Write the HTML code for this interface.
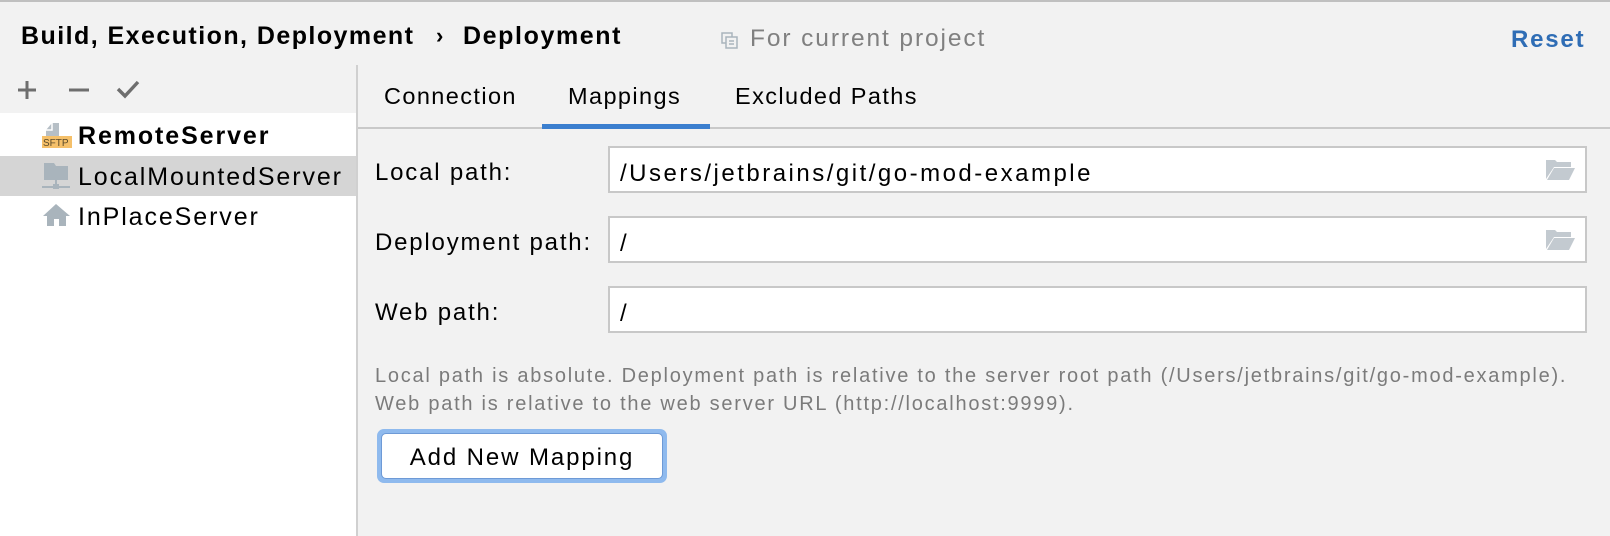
<!DOCTYPE html>
<html><head><meta charset="utf-8"><style>
*{margin:0;padding:0;box-sizing:border-box}
body{width:1610px;height:536px;background:#f2f2f2;font-family:"Liberation Sans",sans-serif;color:#000;position:relative;overflow:hidden}
.a{position:absolute;white-space:nowrap}
.lbl{font-size:24px;letter-spacing:1.8px}
.tab{font-size:23.5px;letter-spacing:1.4px}
.field{position:absolute;left:608px;width:979px;height:47px;background:#fff;border:2px solid #c8c8c8;font-size:24px;padding:12px 0 0 10px;letter-spacing:2.5px}
.help{font-size:20px;color:#7b7b7b;letter-spacing:1.75px}
.row{position:absolute;left:0;width:356px;height:40px}
.li{font-size:25px;letter-spacing:1.9px}
</style></head><body>
<div class="a" style="left:0;top:0;width:1610px;height:2px;background:#c0c0c0"></div>
<div class="a" style="left:21px;top:22px;font-size:25px;font-weight:bold;letter-spacing:1.45px">Build, Execution, Deployment</div>
<div class="a" style="left:436px;top:23px;font-size:22px;font-weight:bold">›</div>
<div class="a" style="left:463px;top:22px;font-size:25px;font-weight:bold;letter-spacing:1.6px">Deployment</div>
<svg class="a" style="left:721px;top:32px" width="18" height="18" viewBox="0 0 18 18"><rect x="1" y="1" width="10" height="10" fill="none" stroke="#a9b4bc" stroke-width="1.5"/><rect x="5" y="5" width="11" height="11" fill="#f2f2f2" stroke="#a9b4bc" stroke-width="1.5"/><path d="M8 9h5M8 12h5" stroke="#a9b4bc" stroke-width="1.5"/></svg>
<div class="a" style="left:750px;top:25px;font-size:24.5px;color:#808080;letter-spacing:1.9px">For current project</div>
<div class="a" style="left:1511px;top:26px;font-size:24px;font-weight:bold;color:#2f6db5;letter-spacing:1.8px">Reset</div>

<div class="a" style="left:0;top:113px;width:356px;height:423px;background:#fff"></div>
<div class="a" style="left:356px;top:65px;width:2px;height:471px;background:#d0d0d0"></div>
<svg class="a" style="left:14px;top:78px" width="140" height="24" viewBox="0 0 140 24"><path d="M4 12h18M13 3v18" stroke="#6e6e6e" stroke-width="3"/><path d="M55 12h20" stroke="#6e6e6e" stroke-width="3"/><path d="M104 11l7 7 13-14" stroke="#6e6e6e" stroke-width="3.4" fill="none"/></svg>

<svg class="a" style="left:42px;top:121px" width="30" height="28" viewBox="0 0 30 28"><path d="M10 2h7v13H4v-6z" fill="#b6bfc6"/><path d="M4 9h6V2" fill="none" stroke="#fff" stroke-width="1.5"/><rect x="0" y="15" width="30" height="12" fill="#f5c06a"/><text x="1" y="25" font-family="Liberation Sans" font-size="10" fill="#5a4a2a">SFTP</text></svg>
<div class="a li" style="left:78px;top:122px;font-weight:bold">RemoteServer</div>
<div class="row" style="top:156px;background:#d5d5d5"></div>
<svg class="a" style="left:42px;top:161px" width="30" height="30" viewBox="0 0 30 30"><path d="M2 2h10l2 3h12v14H2z" fill="#a9b4bc"/><path d="M14 19v6M0 26h28" stroke="#a9b4bc" stroke-width="2"/><rect x="11" y="23" width="6" height="5" fill="#a9b4bc"/></svg>
<div class="a li" style="left:78px;top:163px">LocalMountedServer</div>
<svg class="a" style="left:42px;top:203px" width="30" height="24" viewBox="0 0 30 24"><path d="M14 1L1 13h4v10h7v-7h5v7h7V13h4z" fill="#a9b4bc"/></svg>
<div class="a li" style="left:78px;top:203px">InPlaceServer</div>

<div class="a" style="left:358px;top:127px;width:1252px;height:2px;background:#c9c9c9"></div>
<div class="a" style="left:542px;top:124px;width:168px;height:5px;background:#3b7fcf"></div>
<div class="a tab" style="left:384px;top:83px">Connection</div>
<div class="a tab" style="left:568px;top:83px">Mappings</div>
<div class="a tab" style="left:735px;top:83px">Excluded Paths</div>

<div class="a lbl" style="left:375px;top:159px">Local path:</div>
<div class="field" style="top:146px">/Users/jetbrains/git/go-mod-example</div>
<div class="a lbl" style="left:375px;top:229px">Deployment path:</div>
<div class="field" style="top:216px">/</div>
<div class="a lbl" style="left:375px;top:299px">Web path:</div>
<div class="field" style="top:286px">/</div>
<svg class="a" style="left:1545px;top:159px" width="30" height="22" viewBox="0 0 30 22"><path d="M1 1h9l2 2h14v5H9L1 20z" fill="#c3cad0"/><path d="M9 9h21l-6 12H2z" fill="#c3cad0"/></svg>
<svg class="a" style="left:1545px;top:229px" width="30" height="22" viewBox="0 0 30 22"><path d="M1 1h9l2 2h14v5H9L1 20z" fill="#c3cad0"/><path d="M9 9h21l-6 12H2z" fill="#c3cad0"/></svg>

<div class="a help" style="left:375px;top:365px">Local path is absolute. Deployment path is relative to the server root path (/Users/jetbrains/git/go-mod-example).</div>
<div class="a help" style="left:375px;top:393px">Web path is relative to the web server URL (http://localhost:9999).</div>

<div class="a" style="left:377px;top:429px;width:290px;height:54px;border-radius:7px;background:#8fbaee"></div>
<div class="a" style="left:381px;top:433px;width:282px;height:46px;border-radius:5px;background:#fff;border:1px solid #6e9ad6;font-size:24px;letter-spacing:1.9px;text-align:center;padding-top:10px">Add New Mapping</div>
</body></html>
